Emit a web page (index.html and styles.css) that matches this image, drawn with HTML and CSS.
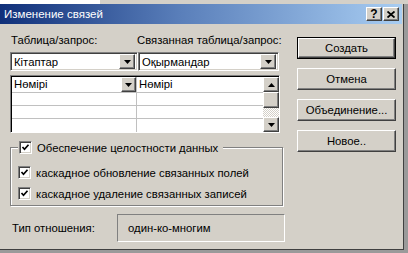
FILE: index.html
```html
<!DOCTYPE html>
<html lang="ru">
<head>
  <meta charset="UTF-8">
  <title>Изменение связей</title>
  <link rel="stylesheet" href="styles.css">
</head>
<body>

  <div class="backdrop">
    <div class="backdrop-doc"></div>
    <div class="backdrop-bar"></div>
  </div>

  <div class="window">
    <div class="titlebar">
      <span class="title">Изменение связей</span>
      <div class="cap-btns">
        <span class="cap-btn raised">?</span>
        <span class="cap-btn raised">
          <svg width="8" height="7" viewBox="0 0 8 7"><path d="M0.5 0.5 L7.5 6.5 M7.5 0.5 L0.5 6.5" stroke="#000" stroke-width="1.8"/></svg>
        </span>
      </div>
    </div>

    <div class="dialog">
      <div class="main">
        <div class="labels">
          <span class="label-left">Таблица/запрос:</span>
          <span>Связанная таблица/запрос:</span>
        </div>

        <div class="combos">
          <div class="combo sunken">
            <span class="combo-text">Кітаптар</span>
            <span class="drop raised">
              <svg width="7" height="4" viewBox="0 0 7 4"><polygon points="0,0 7,0 3.5,4" fill="#000"/></svg>
            </span>
          </div>
          <div class="combo sunken">
            <span class="combo-text">Оқырмандар</span>
            <span class="drop raised">
              <svg width="7" height="4" viewBox="0 0 7 4"><polygon points="0,0 7,0 3.5,4" fill="#000"/></svg>
            </span>
          </div>
        </div>

        <div class="grid sunken-dark">
          <div class="rows">
            <div class="row row-head">
              <div class="cell cell-left">
                <span>Нөмірі</span>
                <span class="drop small raised">
                  <svg width="7" height="4" viewBox="0 0 7 4"><polygon points="0,0 7,0 3.5,4" fill="#000"/></svg>
                </span>
              </div>
              <div class="cell">Нөмірі</div>
            </div>
            <div class="row"><div class="cell cell-left"></div><div class="cell"></div></div>
            <div class="row"><div class="cell cell-left"></div><div class="cell"></div></div>
            <div class="row row-last"><div class="cell cell-left"></div><div class="cell"></div></div>
          </div>
          <div class="scrollbar">
            <span class="sb-btn raised">
              <svg width="7" height="4" viewBox="0 0 7 4"><polygon points="0,4 7,4 3.5,0" fill="#000"/></svg>
            </span>
            <span class="sb-thumb raised"></span>
            <span class="sb-track"></span>
            <span class="sb-btn raised">
              <svg width="7" height="4" viewBox="0 0 7 4"><polygon points="0,0 7,0 3.5,4" fill="#000"/></svg>
            </span>
          </div>
        </div>

        <fieldset class="group">
          <legend class="check">
            <span class="box"><svg width="9" height="9" viewBox="0 0 9 9"><polyline points="1.5,4 3.5,6.2 7.5,1.8" fill="none" stroke="#000" stroke-width="1.7"/></svg></span>
            Обеспечение целостности данных
          </legend>
          <div class="check row-check">
            <span class="box"><svg width="9" height="9" viewBox="0 0 9 9"><polyline points="1.5,4 3.5,6.2 7.5,1.8" fill="none" stroke="#000" stroke-width="1.7"/></svg></span>
            каскадное обновление связанных полей
          </div>
          <div class="check row-check">
            <span class="box"><svg width="9" height="9" viewBox="0 0 9 9"><polyline points="1.5,4 3.5,6.2 7.5,1.8" fill="none" stroke="#000" stroke-width="1.7"/></svg></span>
            каскадное удаление связанных записей
          </div>
        </fieldset>

        <div class="type-row">
          <span class="type-label">Тип отношения:</span>
          <span class="type-value">один-ко-многим</span>
        </div>
      </div>

      <div class="actions">
        <button class="btn btn-default"><span class="btn-face raised">Создать</span></button>
        <button class="btn"><span class="btn-face raised">Отмена</span></button>
        <button class="btn"><span class="btn-face raised">Объединение...</span></button>
        <button class="btn"><span class="btn-face raised">Новое..</span></button>
      </div>
    </div>
  </div>

</body>
</html>
```

FILE: styles.css
```css
:root {
  --face: #d4d0c8;
  --shadow: #808080;
  --dark: #404040;
  --light: #ffffff;
}

* {
  box-sizing: border-box;
}

body {
  margin: 0;
  width: 408px;
  height: 253px;
  overflow: hidden;
  background-color: #9a9a9a;
  font-family: "Liberation Sans", Arial, sans-serif;
  font-size: 11.3px;
  color: #000;
}

/* window behind the dialog */
.backdrop {
  display: flex;
  height: 4px;
}

.backdrop-doc {
  width: 100px;
  background-color: #fff;
}

.backdrop-bar {
  flex: 1;
  background-color: var(--face);
}

/* 3d borders */
.raised {
  background-color: var(--face);
  border: 1px solid;
  border-color: var(--light) var(--dark) var(--dark) var(--light);
  box-shadow: inset -1px -1px var(--shadow);
}

.sunken {
  background-color: #fff;
  border: 1px solid;
  border-color: var(--shadow) var(--light) var(--light) var(--shadow);
  box-shadow: inset 1px 1px var(--dark), inset -1px -1px var(--face);
}

.sunken-dark {
  background-color: #fff;
  border: 1px solid;
  border-color: var(--shadow) var(--light) var(--light) var(--shadow);
  box-shadow: inset 1px 1px #000;
}

.window {
  width: 404px;
  height: 246px;
  background-color: var(--face);
  border-right: 1px solid var(--dark);
  border-bottom: 1px solid var(--dark);
  padding-right: 1px;
  display: flex;
  flex-direction: column;
}

.titlebar {
  height: 20px;
  display: flex;
  align-items: center;
  justify-content: space-between;
  padding: 0 3px 0 4px;
  background: linear-gradient(to right, #10307a, #5a7fba 45%, #a8cdf2);
}

.title {
  color: #fff;
  font-size: 11.5px;
}

.cap-btns {
  display: flex;
  gap: 1px;
}

.cap-btn {
  width: 16px;
  height: 14px;
  display: flex;
  align-items: center;
  justify-content: center;
  font-weight: bold;
  font-size: 12px;
  line-height: 1;
}

.dialog {
  flex: 1;
  display: flex;
  gap: 12px;
  padding: 10px 0 0 10px;
}

.main {
  width: 275px;
}

.labels {
  display: flex;
  height: 13px;
  line-height: 13px;
  padding-left: 1px;
}

.label-left {
  width: 126px;
}

.combos {
  display: grid;
  grid-template-columns: 128px 141px;
  margin-top: 5px;
}

.combo {
  height: 19px;
  display: flex;
  align-items: center;
  padding: 2px;
}

.combo-text {
  flex: 1;
  padding-left: 1px;
}

.drop {
  width: 16px;
  height: 15px;
  display: flex;
  align-items: center;
  justify-content: center;
}

.drop.small {
  width: 15px;
  height: 15px;
}

.grid {
  display: flex;
  width: 270px;
  height: 58px;
  margin-top: 4px;
  padding: 1px 0 0 1px;
}

.rows {
  flex: 1;
  display: flex;
  flex-direction: column;
}

.row {
  display: flex;
  height: 13px;
  border-bottom: 1px solid #c0c0c0;
}

.row-head {
  height: 16px;
}

.row-last {
  flex: 1;
  border-bottom: none;
}

.cell {
  flex: 1;
  padding-left: 2px;
  line-height: 14px;
}

.cell-left {
  flex: 0 0 125px;
  display: flex;
  justify-content: space-between;
  border-right: 1px solid #c0c0c0;
}

.scrollbar {
  width: 16px;
  display: flex;
  flex-direction: column;
}

.sb-btn {
  height: 15px;
  display: flex;
  align-items: center;
  justify-content: center;
}

.sb-thumb {
  height: 16px;
}

.sb-track {
  flex: 1;
  background-color: #fff;
  background-image: repeating-conic-gradient(var(--face) 0 25%, #fff 0 50%);
  background-size: 2px 2px;
}

.group {
  width: 273px;
  margin: 8px 0 0 0;
  padding: 8px 0 1px 7px;
  border: 1px solid var(--shadow);
  box-shadow: inset 1px 1px var(--light), 1px 1px var(--light);
}

.check {
  display: flex;
  align-items: center;
  gap: 5px;
}

legend.check {
  padding: 0 5px 0 1px;
  background-color: var(--face);
}

.row-check {
  height: 21px;
}

.box {
  width: 13px;
  height: 13px;
  display: flex;
  align-items: center;
  justify-content: center;
  background-color: #fff;
  border: 1px solid;
  border-color: var(--shadow) var(--light) var(--light) var(--shadow);
  box-shadow: inset 1px 1px var(--dark), inset -1px -1px var(--face);
}

.type-row {
  display: flex;
  align-items: center;
  margin-top: 8px;
}

.type-label {
  width: 107px;
  padding-left: 2px;
}

.type-value {
  width: 168px;
  height: 28px;
  display: flex;
  align-items: center;
  padding-left: 10px;
  border: 1px solid;
  border-color: var(--shadow) var(--light) var(--light) var(--shadow);
}

.actions {
  display: flex;
  flex-direction: column;
  gap: 9px;
  padding-top: 3px;
}

.btn {
  width: 99px;
  height: 22px;
  padding: 0;
  border: none;
  background: none;
  font: inherit;
  color: #000;
  display: flex;
}

.btn-face {
  flex: 1;
  display: flex;
  align-items: center;
  justify-content: center;
}

.btn-default {
  border: 1px solid #000;
}
```
